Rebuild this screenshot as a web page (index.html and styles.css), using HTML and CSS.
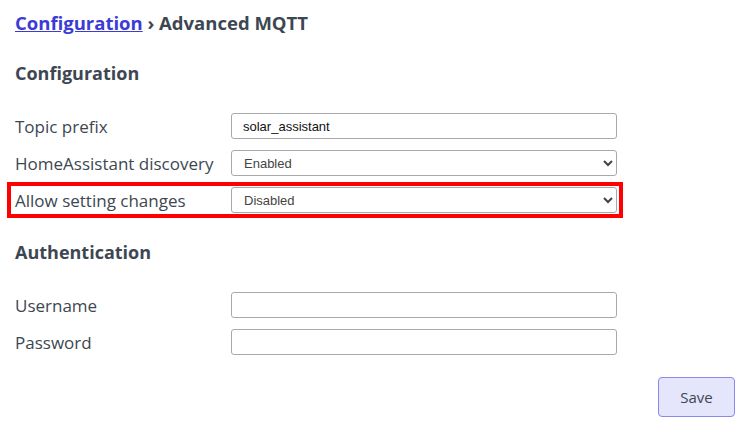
FILE: index.html
```html
<!DOCTYPE html>
<html lang="en">
<head>
    <meta charset="UTF-8">
    <meta name="viewport" content="width=device-width, initial-scale=1.0">
    <title>Advanced MQTT</title>
    <link rel="stylesheet" href="styles.css">
</head>
<body>
    <div class="page">
        <h1 class="crumbs"><a href="#">Configuration</a> › Advanced MQTT</h1>

        <form class="mqtt-form">
            <h2>Configuration</h2>
            <div class="rows">
                <div class="row">
                    <label for="prefix">Topic prefix</label>
                    <input type="text" id="prefix" value="solar_assistant">
                </div>
                <div class="row">
                    <label for="discovery">HomeAssistant discovery</label>
                    <select id="discovery">
                        <option selected>Enabled</option>
                        <option>Disabled</option>
                    </select>
                </div>
                <div class="row highlight">
                    <label for="changes">Allow setting changes</label>
                    <select id="changes">
                        <option>Enabled</option>
                        <option selected>Disabled</option>
                    </select>
                </div>
            </div>

            <h2>Authentication</h2>
            <div class="rows">
                <div class="row">
                    <label for="username">Username</label>
                    <input type="text" id="username">
                </div>
                <div class="row">
                    <label for="password">Password</label>
                    <input type="password" id="password">
                </div>
            </div>

            <div class="actions">
                <button type="submit">Save</button>
            </div>
        </form>
    </div>
</body>
</html>
```

FILE: styles.css
```css
body {
    margin: 0;
    font-family: "Open Sans", "Noto Sans", sans-serif;
    color: #3d4752;
    background: #fff;
}
.page {
    padding: 12px 13px 0 15px;
}
.crumbs {
    margin: 0;
    font-size: 18.5px;
    line-height: 22px;
    font-weight: 700;
    color: #3d4752;
}
.crumbs a {
    color: #3b3bd6;
}
h2 {
    margin: 0;
    font-size: 18px;
    line-height: 24px;
    font-weight: 700;
}
.mqtt-form > h2:first-child {
    margin-top: 27px;
}
.mqtt-form h2 {
    margin-top: 27px;
}
.rows {
    display: flex;
    flex-direction: column;
    gap: 11px;
    margin-top: 28px;
    width: 602px;
}
.row {
    display: flex;
    align-items: center;
    height: 26px;
}
.row label {
    width: 216px;
    font-size: 17px;
    color: #3d4752;
}
.row input,
.row select {
    flex: 1;
    height: 26px;
    box-sizing: border-box;
    border: 1px solid #a9a9a9;
    border-radius: 3px;
    font-family: "Liberation Sans", Arial, sans-serif;
    font-size: 13px;
    background: #fff;
}
.row input {
    padding: 0 11px;
    color: #111;
}
.row select {
    padding: 0 8px;
    color: #444;
}
.highlight {
    border: 4px solid #f00;
    padding: 1px 2px 1px 4px;
    margin: -5px -6px -5px -8px;
}
.actions {
    display: flex;
    justify-content: flex-end;
    margin-top: 22px;
}
button {
    width: 77px;
    height: 40px;
    background: #e5e5fc;
    border: 1px solid #8888ee;
    border-radius: 4px;
    font-family: "Open Sans", "Noto Sans", sans-serif;
    font-size: 15px;
    color: #3d4752;
    cursor: pointer;
}
button:hover {
    background: #d8d8fa;
}
```
